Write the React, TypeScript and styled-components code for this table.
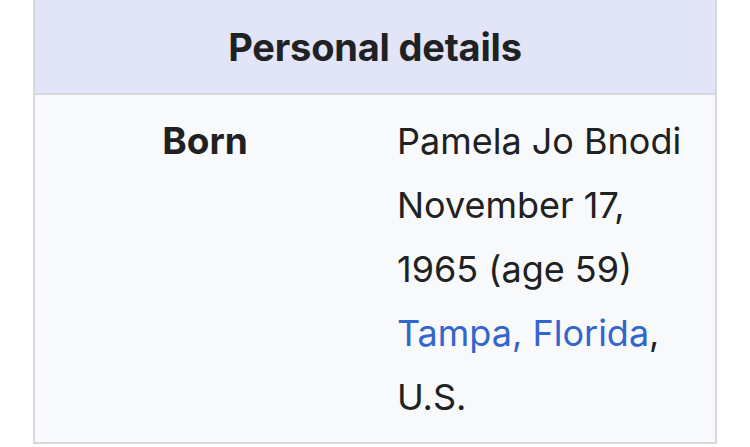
import React from "react";
import styled, { createGlobalStyle } from "styled-components";

const GlobalStyle = createGlobalStyle`
  html, body {
    margin: 0;
    padding: 0;
    background: #ffffff;
  }
  body {
    font-family: Inter, "Noto Sans", "Liberation Sans", sans-serif;
    color: #202122;
    -webkit-font-smoothing: antialiased;
  }
`;

const Page = styled.div`
  width: 750px;
  height: 447px;
  overflow: hidden;
  padding-left: 33px;
  box-sizing: border-box;
`;

const Infobox = styled.div`
  width: 684px;
  box-sizing: border-box;
  margin-top: -2px;
  border: 2px solid #d6d8de;
  background: #f8f9fa;
`;

const Header = styled.div`
  height: 93px;
  display: flex;
  align-items: center;
  justify-content: center;
  background: #e2e4f8;
  border-bottom: 2px solid #d6d8de;
  font-size: 38px;
  font-weight: 700;
  letter-spacing: -0.2px;
`;

const Row = styled.div`
  display: grid;
  grid-template-columns: 340px 1fr;
  padding: 14px 0 13px;
  font-size: 36px;
  line-height: 64px;
`;

const Label = styled.div`
  font-weight: 700;
  font-size: 37px;
  text-align: center;
  align-self: start;
`;

const Value = styled.div`
  padding: 0 14px 0 22px;
  font-weight: 400;
`;

const Link = styled.a`
  color: #3366cc;
  text-decoration: none;
`;

export default function App() {
  return (
    <Page>
      <GlobalStyle />
      <Infobox>
        <Header>Personal details</Header>
        <Row>
          <Label>Born</Label>
          <Value>
            Pamela Jo Bnodi
            <br />
            November 17, 1965 (age 59)
            <br />
            <Link href="#">Tampa, Florida</Link>, U.S.
          </Value>
        </Row>
      </Infobox>
    </Page>
  );
}
